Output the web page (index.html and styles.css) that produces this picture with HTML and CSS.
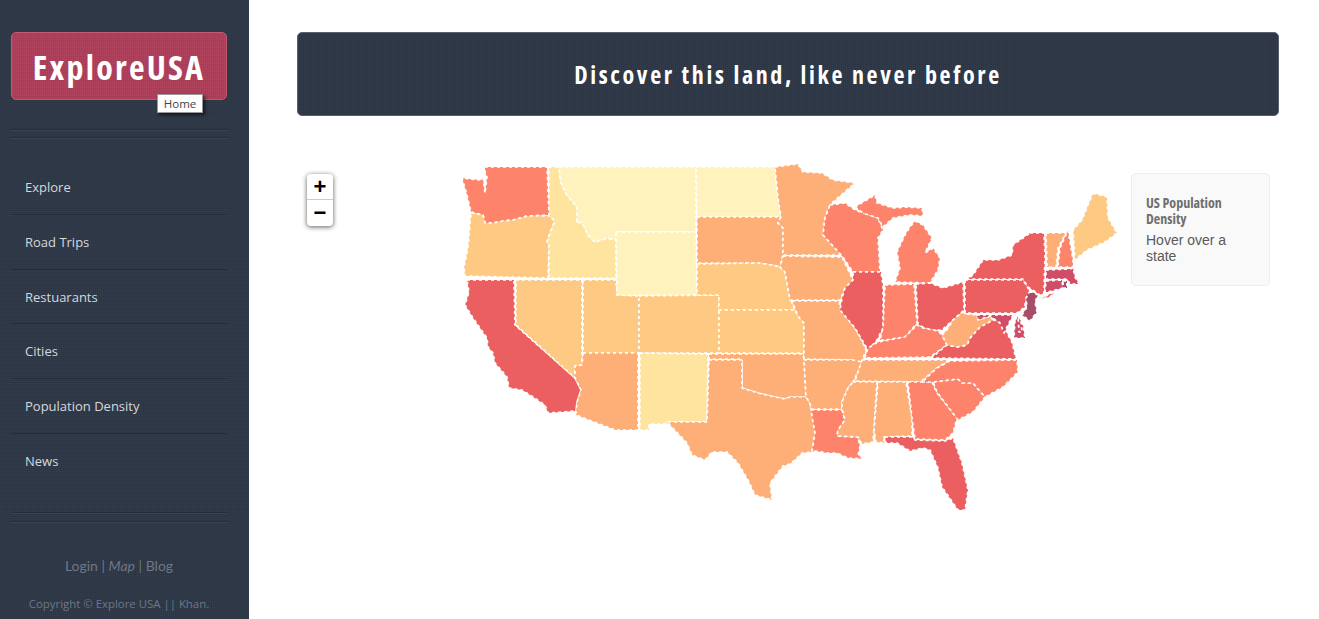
FILE: index.html
```html
<!DOCTYPE html>
<html lang="en">
<head>
  <meta charset="UTF-8" />
  <meta name="viewport" content="width=device-width, initial-scale=1.0"/>
  <title>Explore USA</title>
  <link rel="stylesheet" href="styles.css">
</head>
<body>

  <!-- Sidebar -->
  <div class="sidebar">
    <div class="logo">
      <a href="#">ExploreUSA</a>
      <span class="tip">Home</span>
    </div>
    <div class="double-line line-top"></div>
    <ul class="nav-links">
      <li><a href="#">Explore</a></li>
      <li><a href="#">Road Trips</a></li>
      <li><a href="#">Restuarants</a></li>
      <li><a href="#">Cities</a></li>
      <li><a href="#">Population Density</a></li>
      <li><a href="#">News</a></li>
    </ul>
    <div class="double-line"></div>
    <p class="foot-links">Login | <em>Map</em> | Blog</p>
    <p class="copyright">Copyright © Explore USA || Khan.</p>
  </div>

  <div class="main">
    <div class="banner">
      <h1>Discover this land, like never before</h1>
    </div>

    <div class="map">
      <div class="zoom-control">
        <a href="#">+</a>
        <a href="#">&#8722;</a>
      </div>

      <div class="legend">
        <h4>US Population Density</h4>
        <p>Hover over a state</p>
      </div>

      <svg class="states" viewBox="297 160 982 360" width="982" height="360">
        <!-- WA --><polygon class="d5" points="485,167 547,167 549,215 527,216 513,220 503,221 493,223 485,223 483,215 471,212 467,195 462,178 470,179 481,180 483,178 485,193 487,177 485,172"/>
        <!-- OR --><polygon class="d3" points="471,213 483,215 485,223 493,223 503,221 513,220 527,216 550,216 555,221 550,233 547,242 549,245 548,278 465,276 464,267 468,248"/>
        <!-- CA --><polygon class="d6" points="467,280 514,280 515,325 532,340 575,378 581,390 577,402 576,411 548,413 545,405 533,397 522,390 509,388 507,377 495,363 493,353 488,347 487,338 473,318 465,305 469,292"/>
        <!-- ID --><polygon class="d2" points="549,167 559,167 561,183 567,195 577,207 577,223 582,222 588,235 595,242 607,238 616,240 616,278 549,278 549,245 547,242 550,233 555,221 549,216"/>
        <!-- NV --><polygon class="d3" points="516,280 582,280 582,365 575,366 575,378 516,325"/>
        <!-- UT --><polygon class="d3" points="583,280 616,280 617,295 639,296 639,353 583,353"/>
        <!-- AZ --><polygon class="d4" points="583,353 638,353 638,430 615,430 576,415 576,411 577,402 581,390 575,378 575,366 582,365"/>
        <!-- MT --><polygon class="d1" points="559,167 696,167 696,232 616,232 616,240 607,238 595,242 588,235 582,222 577,223 577,207 567,195 561,183"/>
        <!-- WY --><polygon class="d1" points="616,232 696,232 697,295 617,295"/>
        <!-- CO --><polygon class="d3" points="639,296 719,295 719,353 639,353"/>
        <!-- NM --><polygon class="d2" points="640,353 708,354 707,422 667,422 668,424 649,424 649,430 640,430"/>
        <!-- ND --><polygon class="d1" points="696,167 775,167 778,198 781,217 697,217"/>
        <!-- SD --><polygon class="d4" points="697,217 781,217 778,223 783,228 783,255 780,267 772,265 758,263 697,263"/>
        <!-- NE --><polygon class="d3" points="697,264 758,263 772,265 780,267 785,272 790,298 795,310 719,310 719,295 697,295"/>
        <!-- KS --><polygon class="d3" points="719,310 795,310 798,316 804,323 804,353 719,353"/>
        <!-- OK --><polygon class="d4" points="709,354 803,354 804,360 806,397 800,397 790,397 785,399 775,397 758,393 742,388 742,359 709,359"/>
        <!-- TX --><polygon class="d4" points="709,360 742,360 742,388 758,393 775,397 785,399 790,397 800,397 806,397 810,403 811,410 815,433 812,452 802,453 798,457 790,464 783,466 770,483 772,500 755,495 748,480 738,463 727,452 712,452 705,460 692,455 687,443 668,423 667,422 707,422"/>
        <!-- MN --><polygon class="d4" points="775,167 790,165 798,164 803,172 822,173 833,180 855,183 833,202 830,205 825,218 823,235 842,255 783,255 783,228 778,223 781,217 778,198"/>
        <!-- IA --><polygon class="d4" points="783,256 842,257 853,280 845,288 840,300 790,300 785,272 780,267"/>
        <!-- MO --><polygon class="d4" points="792,301 839,301 841,310 855,328 862,341 866,350 862,361 857,367 853,360 804,359 804,323 798,316"/>
        <!-- AR --><polygon class="d4" points="804,360 853,360 862,362 858,372 853,382 848,388 842,402 842,409 811,409 810,403 806,397"/>
        <!-- LA --><polygon class="d5" points="811,410 842,410 845,420 838,430 837,436 858,437 860,447 858,455 865,459 848,458 837,453 827,453 815,451 812,452 815,433"/>
        <!-- WI --><polygon class="d5" points="830,205 845,203 855,210 878,218 883,230 878,238 880,272 853,272 843,257 823,235 825,218"/>
        <!-- IL --><polygon class="d6" points="853,272 881,272 883,285 883,328 877,340 868,350 862,340 855,328 840,310 842,298 845,288 853,280"/>
        <!-- MI --><polygon class="d5" points="915,221 923,225 932,238 925,253 933,248 940,258 938,270 930,283 895,282 900,268 897,252 905,235 910,227"/>
        <polygon class="d5" points="855,207 875,195 877,203 893,208 905,207 922,208 923,216 910,215 893,218 883,227 878,218 863,213"/>
        <!-- IN --><polygon class="d5" points="885,285 914,284 917,323 905,337 885,340 880,340 883,328"/>
        <!-- OH --><polygon class="d6" points="916,284 930,283 943,288 963,282 964,310 953,320 942,330 930,330 918,325"/>
        <!-- KY --><polygon class="d5" points="865,358 868,348 878,342 905,337 917,325 923,328 938,331 942,335 947,345 930,357"/>
        <!-- TN --><polygon class="d4" points="862,360 950,360 937,368 923,380 920,382 855,381 858,372"/>
        <!-- MS --><polygon class="d4" points="853,382 877,382 873,442 862,444 858,437 837,436 838,430 845,420 842,409 842,402 848,388"/>
        <!-- AL --><polygon class="d4" points="878,382 906,382 912,418 912,436 883,437 885,443 876,442 874,430"/>
        <!-- GA --><polygon class="d5" points="908,382 932,382 937,393 957,418 953,433 945,440 915,439 912,418"/>
        <!-- FL --><polygon class="d6" points="885,437 912,437 915,440 945,441 953,438 962,463 968,490 965,510 958,510 942,487 938,468 930,450 923,448 910,451 897,443 886,443"/>
        <!-- SC --><polygon class="d5" points="933,382 958,379 962,383 973,383 985,397 973,412 958,420 937,392"/>
        <!-- NC --><polygon class="d5" points="922,382 933,382 958,379 962,383 973,383 985,397 1003,387 1018,372 1017,360 950,361 937,368"/>
        <!-- VA --><polygon class="d6" points="931,358 947,345 957,347 967,345 970,338 980,327 993,320 1003,323 1008,335 1012,342 1016,359"/>
        <!-- WV --><polygon class="d4" points="942,335 947,330 953,320 963,312 965,314 977,315 978,320 990,316 993,320 980,327 970,338 967,345 957,347 947,345"/>
        <!-- PA --><polygon class="d6" points="965,280 1023,280 1028,288 1030,292 1025,302 1025,307 1017,313 965,313"/>
        <!-- NY --><polygon class="d6" points="1030,233 1044,233 1045,255 1044,293 1040,295 1028,287 1023,279 967,279 973,275 983,260 998,260 1012,255 1013,245"/>
        <polygon class="d6" points="1040,299 1056,291 1050,297"/>
        <!-- MD --><polygon class="d7" points="977,315 1013,315 1007,327 1004,333 1000,323 990,316 978,320"/>
        <polygon class="d7" points="1015,320 1018,316 1023,325 1025,338 1014,338"/>
        <!-- DE --><polygon class="d7" points="1018,316 1021,322 1022,332 1019,332"/>
        <!-- NJ --><polygon class="d8" points="1030,291 1038,295 1035,302 1037,312 1030,321 1022,315 1027,307 1026,298"/>
        <!-- CT --><polygon class="d7" points="1046,281 1062,280 1063,288 1048,292 1045,292"/>
        <!-- RI --><polygon class="d8" points="1063,281 1067,281 1067,288 1063,288"/>
        <!-- MA --><polygon class="d7" points="1046,270 1070,269 1073,268 1075,277 1079,284 1070,284 1067,279 1046,279"/>
        <!-- VT --><polygon class="d4" points="1046,233 1066,233 1058,248 1056,267 1047,267"/>
        <!-- NH --><polygon class="d5" points="1068,230 1073,260 1073,267 1058,267 1060,248"/>
        <!-- ME --><polygon class="d3" points="1093,193 1107,197 1108,218 1117,233 1105,242 1087,250 1075,260 1073,230 1082,220"/>
      </svg>
    </div>
  </div>

</body>
</html>
```

FILE: styles.css
```css
* {
  box-sizing: border-box;
  margin: 0;
  padding: 0;
}

html, body {
  height: 100%;
  overflow: hidden;
}

body {
  display: flex;
  font-family: 'Open Sans', 'Noto Sans', sans-serif;
  background: #fff;
  color: #333;
}

/* Sidebar */
.sidebar {
  width: 249px;
  height: 619px;
  flex-shrink: 0;
  padding: 32px 22px 0 11px;
  background-color: #2e3848;
  background-image:
    repeating-linear-gradient(0deg, rgba(0, 0, 0, 0.07) 0 1px, transparent 1px 2px),
    repeating-linear-gradient(90deg, rgba(255, 255, 255, 0.025) 0 1px, transparent 1px 2px);
}

.logo {
  position: relative;
  height: 68px;
  border-radius: 5px;
  border: 1px solid #c25a72;
  background-color: #b33c5a;
  background-image:
    repeating-linear-gradient(0deg, rgba(0, 0, 0, 0.05) 0 1px, transparent 1px 2px),
    repeating-linear-gradient(90deg, rgba(255, 255, 255, 0.03) 0 1px, transparent 1px 2px);
  text-align: center;
}

.logo a {
  display: block;
  color: #fff;
  font-size: 34px;
  font-weight: 700;
  font-stretch: 75%;
  letter-spacing: 2.2px;
  line-height: 68px;
  text-decoration: none;
}

.tip {
  position: absolute;
  left: 145px;
  top: 61px;
  width: 46px;
  height: 19px;
  background: #fff;
  border: 1px solid #999;
  box-shadow: 2px 2px 3px rgba(0, 0, 0, 0.6);
  color: #444;
  font-size: 11.5px;
  line-height: 17px;
  text-align: center;
}

.double-line {
  height: 10px;
  border-top: 1px solid #252d3a;
  border-bottom: 1px solid #252d3a;
  box-shadow: 0 1px 0 #3a4454, inset 0 1px 0 #3a4454;
}

.line-top {
  height: 9px;
  margin-top: 29px;
}

.nav-links {
  list-style: none;
  margin-top: 22px;
  height: 352px;
}

.nav-links li {
  height: 54.8px;
  padding: 15px 0 0 14px;
  border-bottom: 1px solid #252d3a;
}

.nav-links li:last-child {
  border-bottom: none;
}

.nav-links a {
  color: #d5d9df;
  font-size: 13px;
  line-height: 18px;
  text-decoration: none;
}

.foot-links {
  margin-top: 34px;
  color: #6e7786;
  font-family: 'Lato', sans-serif;
  font-size: 14px;
  line-height: 20px;
  text-align: center;
}

.copyright {
  margin-top: 19px;
  color: #6e7786;
  font-size: 11.4px;
  line-height: 18px;
  white-space: nowrap;
  text-align: center;
}

/* Main */
.main {
  flex: 1;
  padding: 32px 40px 0 48px;
}

.banner {
  height: 84px;
  border-radius: 5px;
  border: 1px solid #59616f;
  background-color: #2e3848;
  background-image:
    repeating-linear-gradient(0deg, rgba(0, 0, 0, 0.07) 0 1px, transparent 1px 2px),
    repeating-linear-gradient(90deg, rgba(255, 255, 255, 0.025) 0 1px, transparent 1px 2px);
  text-align: center;
}

.banner h1 {
  color: #fff;
  font-size: 24px;
  font-weight: 700;
  font-stretch: 75%;
  letter-spacing: 2.62px;
  line-height: 84px;
}

.map {
  position: relative;
  height: 360px;
  margin-top: 44px;
}

.states {
  display: block;
}

.states polygon {
  stroke: #fff;
  stroke-width: 1.7;
  stroke-dasharray: 3;
  stroke-linejoin: round;
}

/* fill colours, low to high density */
.d1 { fill: #fff2bd; }
.d2 { fill: #fee49f; }
.d3 { fill: #fec982; }
.d4 { fill: #feaf77; }
.d5 { fill: #fd836a; }
.d6 { fill: #eb5f60; }
.d7 { fill: #d14d67; }
.d8 { fill: #a64d67; }

.zoom-control {
  position: absolute;
  left: 10px;
  top: 14px;
  width: 26px;
  border-radius: 4px;
  background: #fff;
  box-shadow: 0 1px 5px rgba(0, 0, 0, 0.65);
}

.zoom-control a {
  display: block;
  height: 26px;
  color: #000;
  font-family: 'Liberation Sans', sans-serif;
  font-size: 22px;
  font-weight: 700;
  line-height: 26px;
  text-align: center;
  text-decoration: none;
}

.zoom-control a:first-child {
  border-bottom: 1px solid #ccc;
}

.legend {
  position: absolute;
  left: 834px;
  top: 13px;
  width: 139px;
  height: 113px;
  padding: 21px 14px 0;
  border: 1px solid #eee;
  border-radius: 5px;
  background: #f9f9f9;
  z-index: 2;
}

.legend h4 {
  color: #6f6f6f;
  font-size: 14px;
  font-weight: 700;
  font-stretch: 75%;
  line-height: 16px;
}

.legend p {
  margin-top: 5px;
  color: #5a5a5a;
  font-family: 'Liberation Sans', Arial, sans-serif;
  font-size: 14px;
  line-height: 16px;
}
```
